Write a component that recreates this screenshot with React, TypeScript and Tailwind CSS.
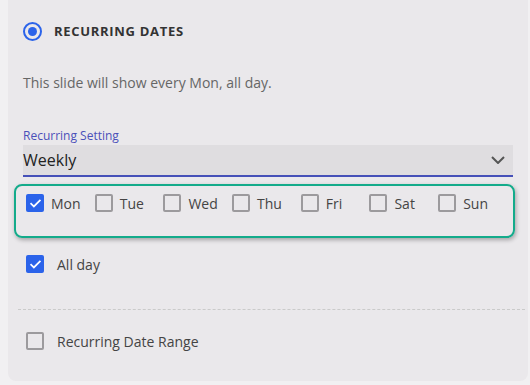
import React from "react"

const days = ["Mon", "Tue", "Wed", "Thu", "Fri", "Sat", "Sun"]

function Box({ checked }: { checked: boolean }) {
  if (checked) {
    return (
      <span className="flex h-[18px] w-[18px] shrink-0 items-center justify-center rounded-[2px] bg-[#2b63ea]">
        <svg width="13" height="13" viewBox="0 0 24 24" fill="none" stroke="white" strokeWidth="3.2" strokeLinecap="square">
          <path d="M4 12.5l5 5L20 6.5" />
        </svg>
      </span>
    )
  }
  return <span className="h-[18px] w-[18px] shrink-0 rounded-[2px] border-2 border-[#9c9a9d]" />
}

export default function App() {
  const checkedDays = ["Mon"]

  return (
    <div
      className="h-[385px] w-[530px] bg-[#f1f0f2] pb-1 pl-2 pr-[2px]"
      style={{ fontFamily: '"Open Sans", "Noto Sans", sans-serif' }}
    >
      <div className="h-full rounded-b-lg bg-[#eae8eb] pl-[15px] pr-[15px]">
        {/* Header */}
        <div className="flex items-center gap-3 pt-[22px]">
          <span className="flex h-[19px] w-[19px] items-center justify-center rounded-full border-2 border-[#2b63ea]">
            <span className="h-[9px] w-[9px] rounded-full bg-[#2b63ea]" />
          </span>
          <span className="text-[13px] font-bold uppercase tracking-[0.7px] text-[#333333]">Recurring Dates</span>
        </div>

        <p className="mt-[31px] text-[14px] leading-5 text-[#666666]">This slide will show every Mon, all day.</p>

        {/* Recurring setting select */}
        <div className="mt-[35px]">
          <div className="text-[12px] leading-4 text-[#4b50b9]">Recurring Setting</div>
          <div className="mt-[1px] flex h-[32px] items-center justify-between border-b-2 border-[#4650b8] bg-[#dfdde0]">
            <span className="text-[16px] text-[#222222]">Weekly</span>
            <svg width="14" height="8" viewBox="0 0 14 8" fill="none" stroke="#555" strokeWidth="2" className="mr-[8px]">
              <path d="M1 1l6 6 6-6" />
            </svg>
          </div>
        </div>

        {/* Days */}
        <div className="-ml-[9px] mr-[-2px] mt-[7px] flex h-[54px] items-start rounded-lg border-2 border-[#14ab8b] pl-[10px] pt-[7px] shadow-[1px_2px_4px_rgba(0,0,0,0.3)]">
          {days.map((d) => (
            <label key={d} className="flex w-[68.7px] items-center gap-[7px]">
              <Box checked={checkedDays.includes(d)} />
              <span className="text-[14px] text-[#444444]">{d}</span>
            </label>
          ))}
        </div>

        <div className="mt-[16px] flex items-center gap-[13px] pl-[3px]">
          <Box checked />
          <span className="text-[14px] text-[#444444]">All day</span>
        </div>

        <div className="-ml-[5px] mr-[-12px] mt-[34px] border-t border-dashed border-[#cacaca]" />

        <div className="mt-[21px] flex items-center gap-[13px] pl-[3px]">
          <Box checked={false} />
          <span className="text-[14px] text-[#444444]">Recurring Date Range</span>
        </div>
      </div>
    </div>
  )
}
